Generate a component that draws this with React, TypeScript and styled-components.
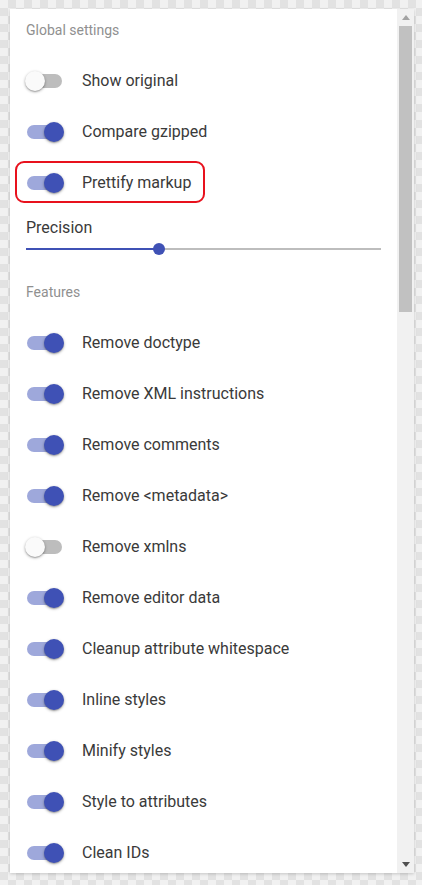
import React from "react";
import styled, { createGlobalStyle, css } from "styled-components";

const GlobalStyle = createGlobalStyle`
  html, body { margin: 0; padding: 0; }
  body {
    font-family: Roboto, "Noto Sans", Arial, sans-serif;
    background-color: #f1f1f1;
    background-image: conic-gradient(#e2e2e2 25%, transparent 0 50%, #e2e2e2 0 75%, transparent 0);
    background-size: 16px 16px;
  }
`;

const Page = styled.div`
  padding: 9px 8px 12px 10px;
  height: 885px;
  box-sizing: border-box;
`;

const Panel = styled.div`
  display: flex;
  width: 404px;
  height: 864px;
  background: #fff;
  box-shadow: 0 1px 3px rgba(0, 0, 0, 0.18);
`;

const Content = styled.div`
  flex: 1;
  overflow: hidden;
  padding: 0 16px;
`;

const Heading = styled.div`
  font-size: 14px;
  line-height: 20px;
  height: 20px;
  color: #909090;
  margin-top: 11px;
  margin-bottom: 15px;
`;

const Row = styled.div`
  height: 51px;
  display: flex;
  align-items: center;
`;

const RowInner = styled.div<{ $highlight?: boolean }>`
  position: relative;
  display: inline-flex;
  align-items: center;
  height: 20px;
  ${(p) =>
    p.$highlight &&
    css`
      &::after {
        content: "";
        position: absolute;
        left: -11px;
        right: -14px;
        top: -12px;
        bottom: -10px;
        border: 2px solid #e8111d;
        border-radius: 9px;
        pointer-events: none;
      }
    `}
`;

const SwitchBox = styled.span`
  position: relative;
  display: inline-block;
  width: 36px;
  height: 20px;
  margin-left: 1px;
  margin-right: 19px;
  flex-shrink: 0;
`;

const Track = styled.span<{ $on: boolean }>`
  position: absolute;
  left: 0;
  top: 3px;
  width: 35px;
  height: 14px;
  border-radius: 7px;
  background: ${(p) => (p.$on ? "#9ea8db" : "#bdbdbd")};
`;

const Thumb = styled.span<{ $on: boolean }>`
  position: absolute;
  top: 0;
  left: ${(p) => (p.$on ? "17px" : "-2px")};
  width: 20px;
  height: 20px;
  border-radius: 50%;
  background: ${(p) => (p.$on ? "#3f51b5" : "#fafafa")};
  box-shadow: 0 1px 3px rgba(0, 0, 0, 0.35), 0 1px 1px rgba(0, 0, 0, 0.14);
`;

const Label = styled.span`
  font-size: 16px;
  color: #3a3a3a;
  white-space: nowrap;
`;

const SliderLabel = styled.div`
  font-size: 16px;
  line-height: 20px;
  color: #3a3a3a;
  margin-top: 10px;
`;

const SliderBox = styled.div`
  position: relative;
  height: 20px;
  margin-top: 1px;
  margin-bottom: 23px;
`;

const SliderRail = styled.div`
  position: absolute;
  left: 0;
  right: 0;
  top: 9px;
  height: 2px;
  background: #bdbdbd;
`;

const SliderFill = styled.div`
  position: absolute;
  left: 0;
  top: 9px;
  height: 2px;
  background: #3f51b5;
`;

const SliderThumb = styled.div`
  position: absolute;
  top: 4px;
  width: 12px;
  height: 12px;
  margin-left: -6px;
  border-radius: 50%;
  background: #3f51b5;
`;

const Scrollbar = styled.div`
  width: 17px;
  flex-shrink: 0;
  background: #f1f1f1;
  display: flex;
  flex-direction: column;
`;

const ScrollButton = styled.div`
  height: 17px;
  display: flex;
  align-items: center;
  justify-content: center;
  flex-shrink: 0;
`;

const ScrollThumb = styled.div`
  margin: 0 2px;
  height: 286px;
  background: #c1c1c1;
  flex-shrink: 0;
`;

const Spacer = styled.div`
  flex: 1;
`;

type Item = { label: string; on: boolean; highlight?: boolean };

const globalItems: Item[] = [
  { label: "Show original", on: false },
  { label: "Compare gzipped", on: true },
  { label: "Prettify markup", on: true, highlight: true },
];

const features: Item[] = [
  { label: "Remove doctype", on: true },
  { label: "Remove XML instructions", on: true },
  { label: "Remove comments", on: true },
  { label: "Remove <metadata>", on: true },
  { label: "Remove xmlns", on: false },
  { label: "Remove editor data", on: true },
  { label: "Cleanup attribute whitespace", on: true },
  { label: "Inline styles", on: true },
  { label: "Minify styles", on: true },
  { label: "Style to attributes", on: true },
  { label: "Clean IDs", on: true },
];

const ToggleRow: React.FC<Item> = ({ label, on, highlight }) => (
  <Row>
    <RowInner $highlight={highlight}>
      <SwitchBox>
        <Track $on={on} />
        <Thumb $on={on} />
      </SwitchBox>
      <Label>{label}</Label>
    </RowInner>
  </Row>
);

export default function App() {
  const precision = 0.375;
  return (
    <>
      <GlobalStyle />
      <Page>
        <Panel>
          <Content>
            <Heading>Global settings</Heading>
            {globalItems.map((it) => (
              <ToggleRow key={it.label} {...it} />
            ))}
            <SliderLabel>Precision</SliderLabel>
            <SliderBox>
              <SliderRail />
              <SliderFill style={{ width: `${precision * 100}%` }} />
              <SliderThumb style={{ left: `${precision * 100}%` }} />
            </SliderBox>
            <Heading>Features</Heading>
            {features.map((it) => (
              <ToggleRow key={it.label} {...it} />
            ))}
          </Content>
          <Scrollbar>
            <ScrollButton>
              <svg width="8" height="5" viewBox="0 0 8 5">
                <polygon points="0,5 8,5 4,0" fill="#a3a3a3" />
              </svg>
            </ScrollButton>
            <ScrollThumb />
            <Spacer />
            <ScrollButton>
              <svg width="8" height="5" viewBox="0 0 8 5">
                <polygon points="0,0 8,0 4,5" fill="#505050" />
              </svg>
            </ScrollButton>
          </Scrollbar>
        </Panel>
      </Page>
    </>
  );
}
